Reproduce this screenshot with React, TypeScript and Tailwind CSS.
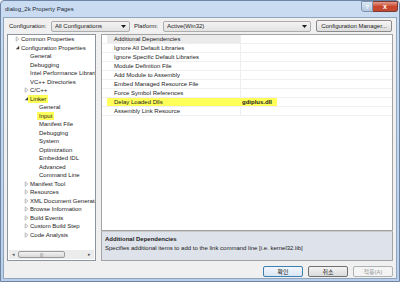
import React from 'react'

type Node = { label: string; level: 0 | 1 | 2; arrow?: 'open' | 'closed'; mark?: boolean }

const TREE: Node[] = [
  { label: 'Common Properties', level: 0, arrow: 'closed' },
  { label: 'Configuration Properties', level: 0, arrow: 'open' },
  { label: 'General', level: 1 },
  { label: 'Debugging', level: 1 },
  { label: 'Intel Performance Libraries', level: 1 },
  { label: 'VC++ Directories', level: 1 },
  { label: 'C/C++', level: 1, arrow: 'closed' },
  { label: 'Linker', level: 1, arrow: 'open', mark: true },
  { label: 'General', level: 2 },
  { label: 'Input', level: 2, mark: true },
  { label: 'Manifest File', level: 2 },
  { label: 'Debugging', level: 2 },
  { label: 'System', level: 2 },
  { label: 'Optimization', level: 2 },
  { label: 'Embedded IDL', level: 2 },
  { label: 'Advanced', level: 2 },
  { label: 'Command Line', level: 2 },
  { label: 'Manifest Tool', level: 1, arrow: 'closed' },
  { label: 'Resources', level: 1, arrow: 'closed' },
  { label: 'XML Document Generator', level: 1, arrow: 'closed' },
  { label: 'Browse Information', level: 1, arrow: 'closed' },
  { label: 'Build Events', level: 1, arrow: 'closed' },
  { label: 'Custom Build Step', level: 1, arrow: 'closed' },
  { label: 'Code Analysis', level: 1, arrow: 'closed' },
]

const INDENT = ['pl-[6px]', 'pl-[15px]', 'pl-[24px]']

const PROPS = [
  'Additional Dependencies',
  'Ignore All Default Libraries',
  'Ignore Specific Default Libraries',
  'Module Definition File',
  'Add Module to Assembly',
  'Embed Managed Resource File',
  'Force Symbol References',
  'Delay Loaded Dlls',
  'Assembly Link Resource',
]

function Arrow({ kind }: { kind?: 'open' | 'closed' }) {
  if (kind === 'closed')
    return (
      <svg width="5" height="6" viewBox="0 0 5 6" className="ml-[1px]">
        <path d="M1.2 0.8 L3.8 3 L1.2 5.2 Z" fill="none" stroke="#a8a8a8" strokeWidth="0.8" />
      </svg>
    )
  if (kind === 'open')
    return (
      <svg width="5" height="5" viewBox="0 0 5 5" className="ml-[1px]">
        <path d="M4.2 0.8 L4.2 4.2 L0.8 4.2 Z" fill="#3c3c3c" />
      </svg>
    )
  return null
}

function DropArrow() {
  return (
    <svg width="5" height="3" viewBox="0 0 5 3">
      <path d="M0 0 L5 0 L2.5 3 Z" fill="#1a1a1a" />
    </svg>
  )
}

export default function App() {
  return (
    <div className="w-[400px] h-[282px] flex flex-col bg-gradient-to-b from-[#cadcf1] to-[#b9cfe9] border border-[#6d84a2] rounded-t-[4px] text-[6px] leading-none text-[#1b1b1b] font-['Liberation_Sans','Noto_Sans_CJK_KR',sans-serif] overflow-hidden">
      {/* title bar */}
      <div className="h-[16px] flex items-start justify-between pl-[4px] pr-[1px]">
        <span className="mt-[5px] text-[#202a38]">dialog_2k Property Pages</span>
        <div className="flex">
          <div className="w-[12px] h-[11px] flex items-center justify-center bg-gradient-to-b from-[#dbe6f3] to-[#b4c8df] border border-[#7d93b0] rounded-bl-[3px] text-white text-[6px] font-bold">
            ?
          </div>
          <div className="w-[25px] h-[11px] flex items-center justify-center bg-gradient-to-b from-[#e29a8c] via-[#c9462c] to-[#c14a33] border border-[#7d3a32] border-l-0 rounded-br-[3px] text-white text-[7px] font-bold">
            x
          </div>
        </div>
      </div>

      {/* client */}
      <div className="flex-1 mx-[2px] mb-[2px] bg-[#f0f0f0] border border-[#8fa4be] flex flex-col px-[3px]">
        {/* configuration row */}
        <div className="h-[16px] flex items-center">
          <span className="ml-[2px] w-[42px]">Configuration:</span>
          <div className="w-[79px] h-[11px] flex items-center justify-between px-[3px] bg-gradient-to-b from-[#f4f4f4] to-[#e2e2e2] border border-[#acacac] rounded-[2px]">
            <span>All Configurations</span>
            <DropArrow />
          </div>
          <span className="ml-[4px] w-[29px]">Platform:</span>
          <div className="w-[148px] h-[11px] flex items-center justify-between px-[3px] bg-gradient-to-b from-[#f4f4f4] to-[#e2e2e2] border border-[#acacac] rounded-[2px]">
            <span>Active(Win32)</span>
            <DropArrow />
          </div>
          <div className="ml-[5px] w-[76px] h-[12px] flex items-center justify-center bg-gradient-to-b from-[#f6f6f6] to-[#dcdcdc] border border-[#8a8a8a] rounded-[2px]">
            Configuration Manager...
          </div>
        </div>

        {/* main */}
        <div className="flex-1 flex gap-[5px]">
          {/* tree */}
          <div className="w-[89px] shrink-0 flex flex-col bg-white border border-[#8e959e] overflow-hidden">
            <div className="flex-1 flex flex-col">
              {TREE.map((n, i) => (
                <div key={i} className={`h-[8.5px] flex items-center whitespace-nowrap ${INDENT[n.level]}`}>
                  <div className="w-[7px] shrink-0 flex items-center">
                    <Arrow kind={n.arrow} />
                  </div>
                  {n.mark ? (
                    <span className="shrink-0 bg-[#ffff5a] px-[2px] -ml-[2px] py-[1px]">{n.label}</span>
                  ) : (
                    <span className="shrink-0">{n.label}</span>
                  )}
                </div>
              ))}
            </div>
            {/* horizontal scrollbar */}
            <div className="h-[9px] mb-[1px] mx-[1px] flex items-center bg-[#ececec]">
              <div className="w-[9px] flex justify-center text-[#555] text-[5px]">◂</div>
              <div className="flex-1 h-[7px] flex items-center">
                <div className="w-[47px] h-[7px] flex items-center justify-center bg-gradient-to-b from-[#f3f3f3] to-[#d8d8d8] border border-[#9b9b9b] rounded-[2px] text-[#777] text-[4px]">
                  |||
                </div>
              </div>
              <div className="w-[9px] flex justify-center text-[#555] text-[5px]">▸</div>
            </div>
          </div>

          {/* property grid + description */}
          <div className="flex-1 flex flex-col">
            <div className="flex-1 bg-white border border-[#a3a3a3] flex flex-col">
              {PROPS.map((p, i) => {
                const hi = p === 'Delay Loaded Dlls'
                const sel = i === 0
                return (
                  <div key={p} className="h-[9px] flex border-b border-[#f0f0f0]">
                    <div className="w-[5px]" />
                    <div
                      className={`w-[134px] flex items-center pl-[7px] border-r border-[#eeeeee] ${
                        hi ? 'bg-[#ffff5a] border-[#ffff5a]' : sel ? 'bg-[#ebebeb]' : ''
                      }`}
                    >
                      {p}
                    </div>
                    <div className="flex-1 flex items-center">
                      {hi && (
                        <span className="h-full w-[36px] flex items-center pl-[1px] bg-[#ffff5a] font-bold">
                          gdiplus.dll
                        </span>
                      )}
                    </div>
                  </div>
                )
              })}
            </div>
            <div className="h-[30px] bg-[#dee2ea] border border-[#a3a3a3] border-t-[#c9c9c9] px-[3px] pt-[4px] flex flex-col gap-[3px]">
              <span className="font-bold">Additional Dependencies</span>
              <span>Specifies additional items to add to the link command line [i.e. kernel32.lib]</span>
            </div>
          </div>
        </div>

        {/* buttons */}
        <div className="h-[17px] pt-[5px] pb-[1px] flex justify-end gap-[5px]">
          <div className="w-[40px] h-[11px] flex items-center justify-center bg-gradient-to-b from-[#f2f7fc] to-[#d9e6f3] border border-[#3c7fb1] rounded-[2px]">
            확인
          </div>
          <div className="w-[40px] h-[11px] flex items-center justify-center bg-gradient-to-b from-[#f4f4f4] to-[#dadada] border border-[#707070] rounded-[2px]">
            취소
          </div>
          <div className="w-[40px] h-[11px] flex items-center justify-center bg-[#f4f4f4] border border-[#adb2b5] rounded-[2px] text-[#9a9a9a]">
            적용(A)
          </div>
        </div>
      </div>
    </div>
  )
}
